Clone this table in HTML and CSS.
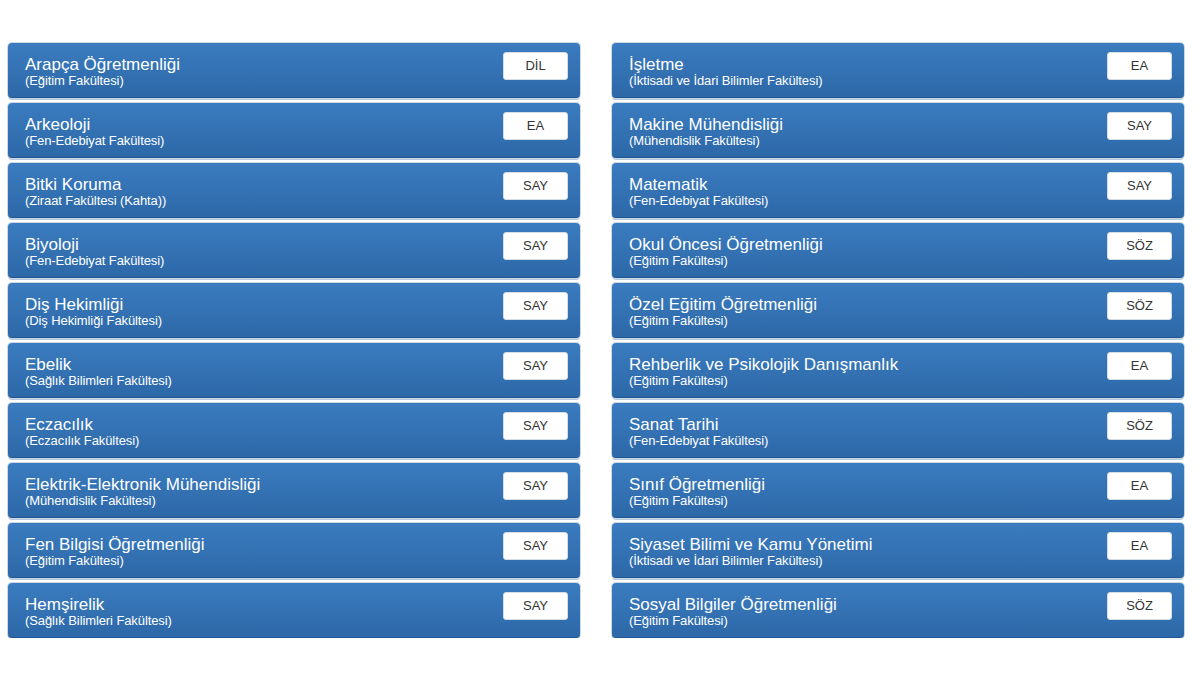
FILE: index.html
```html
<!DOCTYPE html>
<html lang="tr">
<head>
<meta charset="utf-8">
<title>Bölümler</title>
<link rel="stylesheet" href="styles.css">
</head>
<body>
<div class="page">
  <div class="col">
    <div class="card"><div class="info"><div class="title">Arapça Öğretmenliği</div><div class="sub">(Eğitim Fakültesi)</div></div><span class="badge">DİL</span></div>
    <div class="card"><div class="info"><div class="title">Arkeoloji</div><div class="sub">(Fen-Edebiyat Fakültesi)</div></div><span class="badge">EA</span></div>
    <div class="card"><div class="info"><div class="title">Bitki Koruma</div><div class="sub">(Ziraat Fakültesi (Kahta))</div></div><span class="badge">SAY</span></div>
    <div class="card"><div class="info"><div class="title">Biyoloji</div><div class="sub">(Fen-Edebiyat Fakültesi)</div></div><span class="badge">SAY</span></div>
    <div class="card"><div class="info"><div class="title">Diş Hekimliği</div><div class="sub">(Diş Hekimliği Fakültesi)</div></div><span class="badge">SAY</span></div>
    <div class="card"><div class="info"><div class="title">Ebelik</div><div class="sub">(Sağlık Bilimleri Fakültesi)</div></div><span class="badge">SAY</span></div>
    <div class="card"><div class="info"><div class="title">Eczacılık</div><div class="sub">(Eczacılık Fakültesi)</div></div><span class="badge">SAY</span></div>
    <div class="card"><div class="info"><div class="title">Elektrik-Elektronik Mühendisliği</div><div class="sub">(Mühendislik Fakültesi)</div></div><span class="badge">SAY</span></div>
    <div class="card"><div class="info"><div class="title">Fen Bilgisi Öğretmenliği</div><div class="sub">(Eğitim Fakültesi)</div></div><span class="badge">SAY</span></div>
    <div class="card"><div class="info"><div class="title">Hemşirelik</div><div class="sub">(Sağlık Bilimleri Fakültesi)</div></div><span class="badge">SAY</span></div>
  </div>
  <div class="col">
    <div class="card"><div class="info"><div class="title">İşletme</div><div class="sub">(İktisadi ve İdari Bilimler Fakültesi)</div></div><span class="badge">EA</span></div>
    <div class="card"><div class="info"><div class="title">Makine Mühendisliği</div><div class="sub">(Mühendislik Fakültesi)</div></div><span class="badge">SAY</span></div>
    <div class="card"><div class="info"><div class="title">Matematik</div><div class="sub">(Fen-Edebiyat Fakültesi)</div></div><span class="badge">SAY</span></div>
    <div class="card"><div class="info"><div class="title">Okul Öncesi Öğretmenliği</div><div class="sub">(Eğitim Fakültesi)</div></div><span class="badge">SÖZ</span></div>
    <div class="card"><div class="info"><div class="title">Özel Eğitim Öğretmenliği</div><div class="sub">(Eğitim Fakültesi)</div></div><span class="badge">SÖZ</span></div>
    <div class="card"><div class="info"><div class="title">Rehberlik ve Psikolojik Danışmanlık</div><div class="sub">(Eğitim Fakültesi)</div></div><span class="badge">EA</span></div>
    <div class="card"><div class="info"><div class="title">Sanat Tarihi</div><div class="sub">(Fen-Edebiyat Fakültesi)</div></div><span class="badge">SÖZ</span></div>
    <div class="card"><div class="info"><div class="title">Sınıf Öğretmenliği</div><div class="sub">(Eğitim Fakültesi)</div></div><span class="badge">EA</span></div>
    <div class="card"><div class="info"><div class="title">Siyaset Bilimi ve Kamu Yönetimi</div><div class="sub">(İktisadi ve İdari Bilimler Fakültesi)</div></div><span class="badge">EA</span></div>
    <div class="card"><div class="info"><div class="title">Sosyal Bilgiler Öğretmenliği</div><div class="sub">(Eğitim Fakültesi)</div></div><span class="badge">SÖZ</span></div>
  </div>
</div>
</body>
</html>
```
FILE: styles.css
```css
html, body {
  margin: 0;
  padding: 0;
  background: #ffffff;
  font-family: "Liberation Sans", Arial, sans-serif;
}
.page {
  display: grid;
  grid-template-columns: 572px 572px;
  column-gap: 32px;
  padding: 43px 0 0 8px;
}
.col {
  display: flex;
  flex-direction: column;
  gap: 5px;
}
.card {
  box-sizing: border-box;
  height: 55px;
  display: flex;
  justify-content: space-between;
  align-items: flex-start;
  padding: 13px 12px 0 17px;
  border-radius: 4px;
  background: linear-gradient(to bottom, #3a7cbf 0%, #2d68a8 100%);
  border-bottom: 1px solid #1f5590;
  box-shadow: 0 0 0 1px #ccd8e4, 0 2px 0 #b6cbe0;
  color: #ffffff;
}
.title {
  font-size: 17px;
  line-height: 17px;
}
.sub {
  font-size: 13px;
  line-height: 14px;
  margin-top: 1px;
  letter-spacing: -0.1px;
}
.badge {
  margin-top: -4px;
  width: 65px;
  height: 28px;
  box-sizing: border-box;
  background: #ffffff;
  border: 1px solid #d6dde5;
  border-radius: 3px;
  color: #333333;
  font-size: 13px;
  line-height: 26px;
  text-align: center;
}
```
